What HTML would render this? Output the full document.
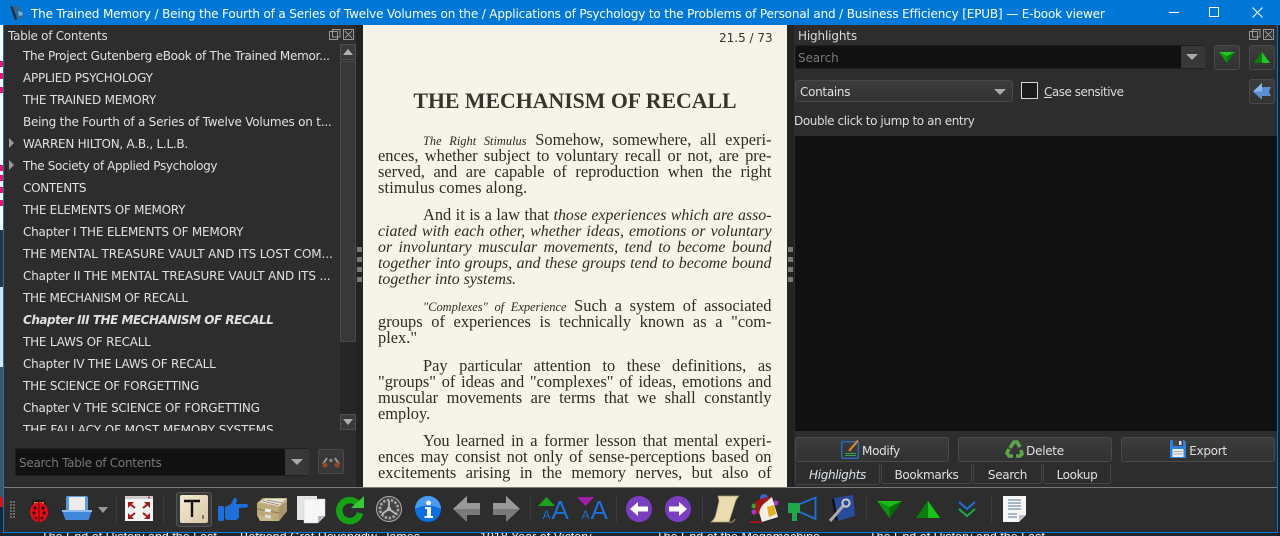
<!DOCTYPE html>
<html><head><meta charset="utf-8"><style>
html,body{margin:0;padding:0;width:1280px;height:536px;overflow:hidden;background:#1c2530}
*{box-sizing:border-box}
#w{position:absolute;left:0;top:0;width:1280px;height:536px;overflow:hidden}
.a{position:absolute}
body{font-family:"DejaVu Sans","Liberation Sans",sans-serif;font-size:12px;color:#dcdcdc}
.t{position:absolute;white-space:nowrap;line-height:16px}
.row{position:absolute;left:23px;white-space:nowrap;line-height:16px;font-size:12px;letter-spacing:-.22px;color:#e0e0e0}
.l{position:absolute;left:378px;width:393.5px;height:16px;line-height:16px;font-family:"Liberation Serif",serif;font-size:16.4px;color:#2f2b26;text-align:justify;text-align-last:justify;white-space:nowrap}
.l.e{text-align-last:left}
.l.i{left:423px;width:348.5px}
.l i{font-size:15.9px}
.l i.m{font-size:12.4px}
.btn{position:absolute;background:linear-gradient(#3c3c3c,#323232);border:1px solid #4a4a4a;border-radius:3px;text-align:center;line-height:26px;color:#e0e0e0;letter-spacing:-.3px}
.tab{position:absolute;top:464px;height:20px;border:1px solid #454545;border-top:0;border-radius:0 0 3px 3px;text-align:center;line-height:22px;color:#e0e0e0;letter-spacing:-.35px}
.sep{position:absolute;top:497px;width:1px;height:25px;background:#3d3d3d}
svg{position:absolute;overflow:visible}
.bg{position:absolute;white-space:nowrap;font:12.5px "Liberation Sans",sans-serif;color:#eee}
</style></head><body><div id="w">
<!-- background behind window -->
<div class="a" style="left:0;top:25px;width:3px;height:205px;background:#fff"></div>
<div class="a" style="left:0;top:61px;width:3px;height:6px;background:#f0145a"></div>
<div class="a" style="left:0;top:73px;width:3px;height:6px;background:#f0145a"></div>
<div class="a" style="left:0;top:87px;width:3px;height:6px;background:#f0145a"></div>
<div class="a" style="left:0;top:165px;width:3px;height:6px;background:#f0145a"></div>
<div class="a" style="left:0;top:175px;width:3px;height:6px;background:#f0145a"></div>
<div class="a" style="left:0;top:187px;width:3px;height:6px;background:#f0145a"></div>
<div class="a" style="left:0;top:200px;width:3px;height:6px;background:#f0145a"></div>
<div class="a" style="left:0;top:230px;width:3px;height:57px;background:#333"></div>
<div class="a" style="left:0;top:287px;width:3px;height:80px;background:#dfe3e6"></div>
<div class="a" style="left:0;top:367px;width:3px;height:130px;background:#4a5157"></div>
<div class="a" style="left:0;top:497px;width:3px;height:10px;background:#e01010"></div>
<div class="a" style="left:1277px;top:25px;width:3px;height:511px;background:#14202c"></div>
<div class="bg" style="left:41px;top:530px">The End of History and the Last</div>
<div class="bg" style="left:240px;top:530px">Befriend Grat Revengdw, James</div>
<div class="bg" style="left:480px;top:530px">1918 Year of Victory</div>
<div class="bg" style="left:656px;top:530px">The End of the Megamachine</div>
<div class="bg" style="left:869px;top:530px">The End of History and the Last</div>
<!-- window -->
<div class="a" style="left:3px;top:0;width:1275px;height:533px;background:#2d2d2d;border:1px solid #0078d7;border-top:0"></div>
<div class="a" style="left:0;top:0;width:1280px;height:25px;background:#0078d7"></div>
<svg style="left:9px;top:5px" width="18" height="16" viewBox="0 0 18 16"><path d="M1 1 L10 1 L16 12 L6 15Z" fill="#2d6a9a"/><path d="M1 1 L4 2 L8 14 L6 15Z" fill="#182c40"/><path d="M9 6l4 1 1 3-4 1z" fill="#7fb0d8"/></svg>
<div class="t" style="left:31px;top:6px;font-size:12px;color:#fff;letter-spacing:-.15px">The Trained Memory / Being the Fourth of a Series of Twelve Volumes on the / Applications of Psychology to the Problems of Personal and / Business Efficiency [EPUB] — E-book viewer</div>
<div class="a" style="left:1169px;top:12px;width:10px;height:1px;background:#fff"></div>
<div class="a" style="left:1209px;top:7px;width:10px;height:10px;border:1px solid #fff"></div>
<svg style="left:1252px;top:7px" width="11" height="11"><path d="M.5 .5L10.5 10.5M10.5 .5L.5 10.5" stroke="#fff" fill="none"/></svg>

<!-- left panel -->
<div class="t" style="left:8px;top:28px;letter-spacing:-.28px">Table of Contents</div>
<svg style="left:329px;top:29px" width="26" height="12" fill="none" stroke="#9a9a9a"><rect x=".5" y="2.5" width="8" height="8"/><rect x="3.5" y=".5" width="7.5" height="7.5"/><rect x="14.5" y=".5" width="10" height="10"/><path d="M16 2l7 7M23 2l-7 7"/></svg>
<div class="a" style="left:4px;top:44px;width:336px;height:387px;overflow:hidden">
<div class="row" style="left:19px;top:4px;letter-spacing:-.28px">The Project Gutenberg eBook of The Trained Memor...</div>
<div class="row" style="left:19px;top:26px">APPLIED PSYCHOLOGY</div>
<div class="row" style="left:19px;top:48px">THE TRAINED MEMORY</div>
<div class="row" style="left:19px;top:70px">Being the Fourth of a Series of Twelve Volumes on t...</div>
<div class="row" style="left:19px;top:92px;letter-spacing:-.26px">WARREN HILTON, A.B., L.L.B.</div>
<div class="row" style="left:19px;top:114px;letter-spacing:-.35px">The Society of Applied Psychology</div>
<div class="row" style="left:19px;top:136px;letter-spacing:-.3px">CONTENTS</div>
<div class="row" style="left:19px;top:158px;letter-spacing:-.27px">THE ELEMENTS OF MEMORY</div>
<div class="row" style="left:19px;top:180px">Chapter I THE ELEMENTS OF MEMORY</div>
<div class="row" style="left:19px;top:202px;letter-spacing:-.11px">THE MENTAL TREASURE VAULT AND ITS LOST COM...</div>
<div class="row" style="left:19px;top:224px;letter-spacing:-.15px">Chapter II THE MENTAL TREASURE VAULT AND ITS ...</div>
<div class="row" style="left:19px;top:246px;letter-spacing:-.3px">THE MECHANISM OF RECALL</div>
<div class="row" style="left:19px;top:268px;font-weight:bold;font-style:italic;letter-spacing:-.48px">Chapter III THE MECHANISM OF RECALL</div>
<div class="row" style="left:19px;top:290px">THE LAWS OF RECALL</div>
<div class="row" style="left:19px;top:312px">Chapter IV THE LAWS OF RECALL</div>
<div class="row" style="left:19px;top:334px">THE SCIENCE OF FORGETTING</div>
<div class="row" style="left:19px;top:356px;letter-spacing:-.25px">Chapter V THE SCIENCE OF FORGETTING</div>
<div class="row" style="left:19px;top:378px;letter-spacing:-.08px">THE FALLACY OF MOST MEMORY SYSTEMS</div>
</div>
<svg style="left:8px;top:138px" width="8" height="34" fill="#9a9a9a"><path d="M1 0l5 5-5 5z"/><path d="M1 22l5 5-5 5z"/></svg>
<!-- scrollbar -->
<div class="a" style="left:340px;top:44px;width:16px;height:16px;background:#3a3a3a;border:1px solid #505050"></div>
<svg style="left:343px;top:49px" width="10" height="6"><path d="M0 6L5 0 10 6Z" fill="#b0b0b0"/></svg>
<div class="a" style="left:340px;top:61px;width:16px;height:281px;background:#383838;border:1px solid #4a4a4a"></div>
<div class="a" style="left:340px;top:342px;width:16px;height:72px;background:#262626"></div>
<div class="a" style="left:340px;top:414px;width:16px;height:16px;background:#3a3a3a;border:1px solid #505050"></div>
<svg style="left:343px;top:419px" width="10" height="6"><path d="M0 0L5 6 10 0Z" fill="#b0b0b0"/></svg>
<!-- search toc -->
<div class="a" style="left:15px;top:448px;width:294px;height:28px;background:#111;border:1px solid #1f1f1f;border-radius:2px"></div>
<div class="a" style="left:285px;top:449px;width:24px;height:26px;background:#383838"></div>
<svg style="left:291px;top:459px" width="12" height="6"><path d="M0 0h12L6 6Z" fill="#aaa"/></svg>
<div class="t" style="left:19px;top:455px;color:#777;letter-spacing:-.28px">Search Table of Contents</div>
<div class="a" style="left:318px;top:449px;width:26px;height:25px;background:#383838;border:1px solid #4a4a4a;border-radius:3px"></div>
<svg style="left:321px;top:456px" width="20" height="12"><path d="M2 8L6 2M18 8L14 2" stroke="#999" stroke-width="2"/><circle cx="4" cy="9" r="2.6" fill="#8a4a25"/><circle cx="16" cy="9" r="2.6" fill="#8a4a25"/><rect x="8.5" y="3" width="3" height="3" fill="#888"/></svg>
<!-- splitter -->
<div class="a" style="left:356px;top:25px;width:7px;height:462px;background:#232323"></div>
<div class="a" style="left:357px;top:247px;width:5px;height:5px;background:#777"></div>
<div class="a" style="left:357px;top:257px;width:5px;height:5px;background:#777"></div>
<div class="a" style="left:357px;top:267px;width:5px;height:5px;background:#777"></div>
<div class="a" style="left:357px;top:277px;width:5px;height:5px;background:#777"></div>
<!-- page -->
<div class="a" style="left:363px;top:25px;width:424px;height:462px;background:#f6f3e8"></div>
<div class="t" style="left:719px;top:30px;color:#333;font-size:12px">21.5 / 73</div>
<div class="a" style="left:363px;top:88px;width:424px;text-align:center;font:bold 21.8px/26px 'Liberation Serif',serif;color:#38332c;white-space:nowrap">THE MECHANISM OF RECALL</div>
<div class="l i" style="top:132px"><i class="m">The Right Stimulus</i> Somehow, somewhere, all experi-</div>
<div class="l" style="top:148px">ences, whether subject to voluntary recall or not, are pre-</div>
<div class="l" style="top:164px">served, and are capable of reproduction when the right</div>
<div class="l e" style="top:180px;letter-spacing:.15px">stimulus comes along.</div>
<div class="l i" style="top:207px">And it is a law that <i>those experiences which are asso-</i></div>
<div class="l" style="top:223px"><i>ciated with each other, whether ideas, emotions or voluntary</i></div>
<div class="l" style="top:239px"><i>or involuntary muscular movements, tend to become bound</i></div>
<div class="l" style="top:255px"><i>together into groups, and these groups tend to become bound</i></div>
<div class="l e" style="top:271px"><i>together into systems.</i></div>
<div class="l i" style="top:298px;left:423px"><i class="m">"Complexes" of Experience</i> Such a system of associated</div>
<div class="l" style="top:314px">groups of experiences is technically known as a "com-</div>
<div class="l e" style="top:330px">plex."</div>
<div class="l i" style="top:358px">Pay particular attention to these definitions, as</div>
<div class="l" style="top:374px">"groups" of ideas and "complexes" of ideas, emotions and</div>
<div class="l" style="top:390px">muscular movements are terms that we shall constantly</div>
<div class="l e" style="top:406px">employ.</div>
<div class="l i" style="top:433px">You learned in a former lesson that mental experi-</div>
<div class="l" style="top:449px">ences may consist not only of sense-perceptions based on</div>
<div class="l" style="top:465px">excitements arising in the memory nerves, but also of</div>
<!-- splitter right -->
<div class="a" style="left:787px;top:25px;width:7px;height:462px;background:#232323"></div>
<div class="a" style="left:788px;top:247px;width:5px;height:5px;background:#777"></div>
<div class="a" style="left:788px;top:257px;width:5px;height:5px;background:#777"></div>
<div class="a" style="left:788px;top:267px;width:5px;height:5px;background:#777"></div>
<div class="a" style="left:788px;top:277px;width:5px;height:5px;background:#777"></div>
<!-- right panel -->
<div class="t" style="left:798px;top:28px;letter-spacing:-.15px">Highlights</div>
<svg style="left:1249px;top:29px" width="26" height="12" fill="none" stroke="#9a9a9a"><rect x=".5" y="2.5" width="8" height="8"/><rect x="3.5" y=".5" width="7.5" height="7.5"/><rect x="14.5" y=".5" width="10" height="10"/><path d="M16 2l7 7M23 2l-7 7"/></svg>
<div class="a" style="left:795px;top:45px;width:410px;height:24px;background:#111;border:1px solid #1f1f1f;border-radius:2px"></div>
<div class="a" style="left:1181px;top:46px;width:24px;height:22px;background:#383838"></div>
<svg style="left:1186px;top:54px" width="12" height="6"><path d="M0 0h12L6 6Z" fill="#aaa"/></svg>
<div class="t" style="left:798px;top:50px;color:#777;letter-spacing:-.1px">Search</div>
<div class="btn" style="left:1214px;top:45px;width:26px;height:25px"></div>
<svg style="left:1219px;top:52px" width="16" height="11"><path d="M0 0H16L8 11Z" fill="#0a9a0a"/><path d="M0 0H16L8 4Z" fill="#23c823"/><path d="M8 4V11L16 0Z" fill="#067a06"/></svg>
<div class="btn" style="left:1249px;top:45px;width:26px;height:25px"></div>
<svg style="left:1254px;top:52px" width="16" height="11"><path d="M0 11H16L8 0Z" fill="#0ea50e"/><path d="M8 0V11H16Z" fill="#21c521"/><path d="M0 11L8 0V11Z" fill="#0b7d0b"/></svg>
<div class="btn" style="left:795px;top:80px;width:218px;height:22px;line-height:22px;text-align:left;padding-left:4px">Contains</div>
<svg style="left:994px;top:89px" width="12" height="6"><path d="M0 0h12L6 6Z" fill="#aaa"/></svg>
<div class="a" style="left:1021px;top:82px;width:17px;height:17px;background:#1a1a1a;border:1px solid #d8d8d8"></div>
<div class="t" style="left:1044px;top:84px;letter-spacing:-.5px"><u>C</u>ase sensitive</div>
<div class="btn" style="left:1249px;top:79px;width:26px;height:25px"></div>
<svg style="left:1253px;top:83px" width="19" height="17"><path d="M0 8.5L9 0V4H18L16 8.5 18 13H9V17Z" fill="#5b8fd0"/><path d="M0 8.5L9 0V8.5Z" fill="#8cb6e8"/></svg>
<div class="t" style="left:794px;top:113px;letter-spacing:-.4px">Double click to jump to an entry</div>
<div class="a" style="left:795px;top:136px;width:482px;height:295px;background:#111"></div>
<div class="btn" style="left:795px;top:437px;width:154px;height:25px;padding-left:18px">Modify</div>
<svg style="left:841px;top:440px" width="20" height="19"><rect x=".7" y="1.7" width="16.6" height="16.6" rx="1.5" fill="none" stroke="#2a6cc4" stroke-width="1.4"/><path d="M8 11L17 .5" stroke="#e88a20" stroke-width="2"/><path d="M4 13.5h11M4 15.5h11" stroke="#3aa04a"/></svg>
<div class="btn" style="left:958px;top:437px;width:154px;height:25px;padding-left:20px">Delete</div>
<svg style="left:1005px;top:439px" width="20" height="20" fill="none" stroke="#5ea54a" stroke-width="3.6"><path d="M5 9L9 3h3l3 5M16 11l1 4-2 2h-4M8 17H4l-2-3 2-4" /></svg>
<div class="btn" style="left:1121px;top:437px;width:154px;height:25px;padding-left:20px">Export</div>
<svg style="left:1169px;top:440px" width="18" height="18"><path d="M1 0H15L17 2V18H1Z" fill="#2f7fe0"/><rect x="4" y="0" width="10" height="6" fill="#444"/><rect x="10" y="1" width="2.5" height="4" fill="#ddd"/><rect x="3.5" y="9" width="11" height="8" fill="#eee"/><path d="M4.5 11.5h9M4.5 14h9" stroke="#aaa"/></svg>
<div class="a" style="left:795px;top:463px;width:85px;height:22px;border:1px solid #454545;border-top:0;border-radius:0 0 3px 3px;text-align:center;line-height:24px;font-style:italic;letter-spacing:-.35px;color:#dce4ee">Highlights</div>
<div class="tab" style="left:881px;width:91px">Bookmarks</div>
<div class="tab" style="left:973px;width:69px">Search</div>
<div class="tab" style="left:1043px;width:68px">Lookup</div>
<!-- toolbar -->
<div class="a" style="left:4px;top:487px;width:1273px;height:1px;background:#7a7a7a"></div>
<div class="a" style="left:4px;top:488px;width:1273px;height:44px;background:#2d2d2d"></div>
<svg style="left:10px;top:501px" width="6" height="18" fill="#6a6a6a"><rect x="0" y="0" width="2" height="2"/><rect x="3" y="0" width="2" height="2"/><rect x="0" y="3" width="2" height="2"/><rect x="3" y="3" width="2" height="2"/><rect x="0" y="6" width="2" height="2"/><rect x="3" y="6" width="2" height="2"/><rect x="0" y="9" width="2" height="2"/><rect x="3" y="9" width="2" height="2"/><rect x="0" y="12" width="2" height="2"/><rect x="3" y="12" width="2" height="2"/><rect x="0" y="15" width="2" height="2"/><rect x="3" y="15" width="2" height="2"/></svg>
<!-- ladybug -->
<svg style="left:27px;top:495px" width="24" height="28"><path d="M5 2l4 5M19 2l-4 5M1 13l5 2M23 13l-5 2M1 23l5-3M23 23l-5-3" stroke="#222" stroke-width="1.2"/><ellipse cx="12" cy="9" rx="7" ry="4.5" fill="#1a1a10"/><path d="M7 8h10" stroke="#c9a820" stroke-width="2"/><ellipse cx="12" cy="17" rx="9" ry="10" fill="#e0101a"/><path d="M12 8v19" stroke="#600"/><g fill="#400"><circle cx="8" cy="13" r="1.6"/><circle cx="16" cy="13" r="1.6"/><circle cx="7" cy="18" r="1.6"/><circle cx="17" cy="18" r="1.6"/><circle cx="9" cy="23" r="1.4"/><circle cx="15" cy="23" r="1.4"/></g></svg>
<!-- printer -->
<svg style="left:62px;top:496px" width="30" height="25"><rect x="4" y="0" width="22" height="15" rx="2" fill="#5a9be0"/><rect x="7" y="1" width="16" height="14" fill="#ececec"/><path d="M0 14H30L27 23Q27 24 25 24H5Q3 24 3 23Z" fill="#3f88dc"/><path d="M0 14H30V16H0Z" fill="#8dbdf0"/></svg>
<svg style="left:98px;top:507px" width="10" height="6"><path d="M0 0h10L5 6Z" fill="#999"/></svg>
<div class="sep" style="left:116px"></div>
<!-- fullscreen -->
<svg style="left:125px;top:496px" width="28" height="25"><rect width="28" height="25" fill="#f4f4f4"/><rect width="28" height="3" fill="#ccc"/><circle cx="24" cy="1.5" r="1" fill="#c33"/><g fill="#a81818"><path d="M3 6h6L3 12Z"/><path d="M25 6h-6L25 12Z"/><path d="M3 23h6L3 17Z"/><path d="M25 23h-6L25 17Z"/></g><path d="M5 8l5 4M23 8l-5 4M5 21l5-4M23 21l-5-4" stroke="#a81818" stroke-width="2"/></svg>
<div class="sep" style="left:163px"></div>
<!-- T -->
<div class="a" style="left:176px;top:492px;width:36px;height:35px;background:#3a3a3a;border:1px solid #555;border-radius:3px"></div>
<div class="a" style="left:180px;top:495px;width:28px;height:28px;background:linear-gradient(135deg,#f4e9d2,#dac9a8);border-radius:2px"></div>
<svg style="left:184px;top:498px" width="20" height="22"><path d="M0 3H16M8 3V19" stroke="#111" stroke-width="2.4" fill="none"/><path d="M19 17v4" stroke="#222"/></svg>
<!-- hand -->
<svg style="left:218px;top:497px" width="30" height="24" fill="#1f6fd8"><rect x="0" y="9" width="6" height="15" rx="1.5"/><path d="M7 10L13 7 16 1Q19 0 19 4L18 7H29Q31 9 29 10.5L21 11 21 20Q20 23 17 23H10Q7 23 7 20Z"/></svg>
<!-- cabinet -->
<svg style="left:257px;top:497px" width="30" height="25"><path d="M0 6L6 1H30V14L22 24H3L0 18Z" fill="#c9b78c"/><path d="M0 6L22 10V24L0 18Z" fill="#bca97a"/><path d="M3 5L9 2H28L22 9Z" fill="#e8e4d8"/><path d="M6 4l16 4M10 3l16 3" stroke="#8a8270" stroke-width=".8"/><path d="M0 12L22 16" stroke="#8e7c52"/><rect x="8" y="12" width="6" height="3" fill="#eee" transform="rotate(10 11 13)"/><rect x="8" y="18" width="6" height="3" fill="#ddd" transform="rotate(10 11 19)"/><path d="M22 10L30 4V14L22 24Z" fill="#a8956a"/></svg>
<!-- copy -->
<svg style="left:297px;top:496px" width="28" height="27"><rect x="0" y="0" width="20" height="24" fill="#e4e4e4"/><path d="M7 3H28V20L21 27H7Z" fill="#f7f7f7" stroke="#ccc" stroke-width=".5"/><path d="M21 27V20H28Z" fill="#bbb"/></svg>
<!-- refresh -->
<svg style="left:336px;top:495px" width="28" height="28"><path d="M21 8A10.5 10.5 0 1 0 24 18" fill="none" stroke="#14a314" stroke-width="6.5"/><path d="M15 13H28V1Z" fill="#36c836"/></svg>
<!-- gear -->
<svg style="left:376px;top:496px" width="26" height="26"><circle cx="13" cy="13" r="12.5" fill="#444" stroke="#aaa"/><circle cx="13" cy="13" r="9" fill="none" stroke="#aaa" stroke-width="2.5" stroke-dasharray="2.4 1.6"/><circle cx="13" cy="13" r="2" fill="#bbb"/><path d="M13 13V5M13 13L6 18M13 13L20 18" stroke="#bbb" stroke-width="1.8"/></svg>
<!-- info -->
<svg style="left:415px;top:496px" width="26" height="26"><circle cx="13" cy="13" r="13" fill="#0a6fe0"/><path d="M0 13A13 13 0 0 1 26 13Q13 6 0 13Z" fill="#4a9cf0"/><circle cx="13.5" cy="7" r="2.4" fill="#fff"/><path d="M10 11H16V20H18V22H9.5V20H12V13H10Z" fill="#fff"/></svg>
<!-- arrows -->
<svg style="left:453px;top:496px" width="27" height="26"><path d="M0 13L14 0V7H27V19H14V26Z" fill="#7a7a7a"/><path d="M0 13L14 0V7H27V13Z" fill="#999"/></svg>
<svg style="left:493px;top:496px" width="27" height="26"><path d="M27 13L13 0V7H0V19H13V26Z" fill="#7a7a7a"/><path d="M27 13L13 0V7H0V13Z" fill="#999"/></svg>
<div class="sep" style="left:530px"></div>
<!-- font size -->
<svg style="left:538px;top:496px" width="31" height="26"><path d="M0 10L8.5 1 17 10Z" fill="#1ca31c"/><text x="4.5" y="23" font-family="Liberation Sans" font-size="12" fill="#1f6fd8">A</text><text x="13.5" y="23" font-family="Liberation Sans" font-size="26" fill="#1f6fd8">A</text></svg>
<svg style="left:577px;top:496px" width="31" height="26"><path d="M0 1L8.5 10 17 1Z" fill="#a01fa8"/><text x="4.5" y="23" font-family="Liberation Sans" font-size="12" fill="#1f6fd8">A</text><text x="13.5" y="23" font-family="Liberation Sans" font-size="26" fill="#1f6fd8">A</text></svg>
<div class="sep" style="left:616px"></div>
<!-- prev next -->
<svg style="left:626px;top:496px" width="26" height="26"><circle cx="13" cy="13" r="13" fill="#7a3fc0"/><path d="M4 13L12 6V10.5H22V15.5H12V20Z" fill="#fff"/></svg>
<svg style="left:665px;top:496px" width="26" height="26"><circle cx="13" cy="13" r="13" fill="#7a3fc0"/><path d="M22 13L14 6V10.5H4V15.5H14V20Z" fill="#fff"/></svg>
<div class="sep" style="left:702px"></div>
<!-- scroll -->
<svg style="left:711px;top:494px" width="29" height="30"><path d="M7 2H28Q25 5 24 9L18 28H0Q4 25 5 20L8 7Z" fill="#e8dcb0" stroke="#a89a6c" stroke-width=".7"/><path d="M18 28Q22 29 24 25" stroke="#a89a6c" fill="none"/></svg>
<!-- paint -->
<svg style="left:750px;top:494px" width="29" height="30"><circle cx="4" cy="12" r="2.5" fill="#3a3"/><circle cx="4" cy="18" r="2.5" fill="#a3c"/><circle cx="26" cy="9" r="2.5" fill="#a3c"/><circle cx="14" cy="4" r="4" fill="#36c"/><path d="M6 8L22 3 28 23 12 28Z" fill="#f2f0e8"/><path d="M5 8Q12 3 22 3L16 8Q10 12 9 20H6Z" fill="#a01818"/><path d="M17 13L24 11 26 20 19 23Z" fill="#e0b020"/><path d="M0 28H12" stroke="#a01818" stroke-width="2"/></svg>
<!-- megaphone -->
<svg style="left:788px;top:496px" width="30" height="26"><path d="M0 7H12V17H9V25H4V17H0Z" fill="#1ea84a"/><path d="M12 8L27.5 1.5V23L12 16" fill="none" stroke="#1f6fd8" stroke-width="1.8"/></svg>
<!-- tool -->
<svg style="left:828px;top:494px" width="28" height="30"><path d="M6 4L25 1 27 22 10 27Z" fill="#2a4a9a"/><path d="M6 4L10 27 7 25 4 6Z" fill="#111"/><path d="M2 27L16 11" stroke="#aaa" stroke-width="3"/><circle cx="18" cy="9" r="3.6" fill="none" stroke="#ccc" stroke-width="2"/></svg>
<div class="sep" style="left:866px"></div>
<svg style="left:877px;top:501px" width="25" height="17"><path d="M0 0H25L12.5 17Z" fill="#0c920c"/><path d="M0 0H25L12.5 6Z" fill="#1dbb1d"/><path d="M12.5 6V17L25 0Z" fill="#056d05"/></svg>
<svg style="left:916px;top:501px" width="24" height="17"><path d="M0 17H24L12 0Z" fill="#14ad14"/><path d="M12 0V17H24Z" fill="#18c018"/><path d="M0 17L12 0V17Z" fill="#0b7d0b"/></svg>
<svg style="left:958px;top:500px" width="18" height="18" fill="none" stroke-width="2"><path d="M1 2L9 9 17 2" stroke="#1f6fd8"/><path d="M1 9L9 16 17 9" stroke="#1ea84a"/></svg>
<div class="sep" style="left:991px"></div>
<svg style="left:1003px;top:496px" width="23" height="26"><path d="M0 0H23V19L16 26H0Z" fill="#f6f6f6"/><path d="M16 26V19H23Z" fill="#c4c4c4"/><path d="M5 4h13M5 7h13M5 10h13M5 13h13M5 18h9M5 21h9" stroke="#8da4bb" stroke-width="1.5"/></svg>
</div></body></html>
